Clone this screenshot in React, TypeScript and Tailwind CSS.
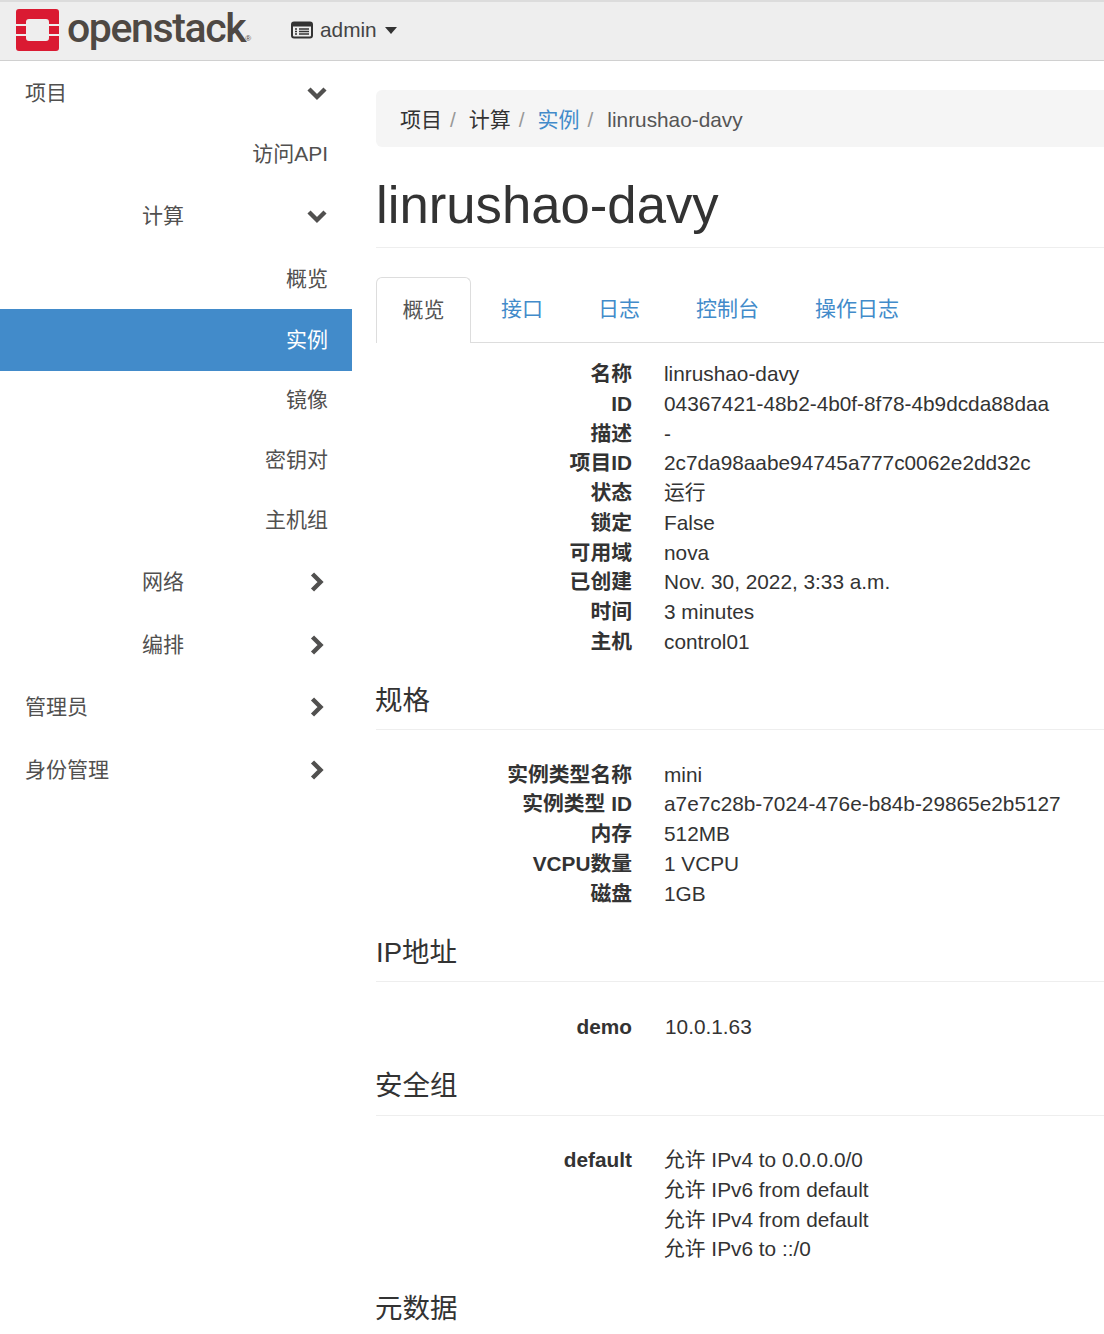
const sideRows = [
  { label: "项目", level: 1, chevron: "down", h: "h-[63px]" },
  { label: "访问API", level: 3, h: "h-[60px]" },
  { label: "计算", level: 2, chevron: "down", h: "h-[64px]" },
  { label: "概览", level: 3, h: "h-[61px]" },
  { label: "实例", level: 3, active: true, h: "h-[62px]" },
  { label: "镜像", level: 3, h: "h-[58px]" },
  { label: "密钥对", level: 3, h: "h-[61px]" },
  { label: "主机组", level: 3, h: "h-[60px]" },
  { label: "网络", level: 2, chevron: "right", h: "h-[63px]" },
  { label: "编排", level: 2, chevron: "right", h: "h-[63px]" },
  { label: "管理员", level: 1, chevron: "right", h: "h-[62px]" },
  { label: "身份管理", level: 1, chevron: "right", h: "h-[63px]" },
];

const overview = [
  ["名称", "linrushao-davy"],
  ["ID", "04367421-48b2-4b0f-8f78-4b9dcda88daa"],
  ["描述", "-"],
  ["项目ID", "2c7da98aabe94745a777c0062e2dd32c"],
  ["状态", "运行"],
  ["锁定", "False"],
  ["可用域", "nova"],
  ["已创建", "Nov. 30, 2022, 3:33 a.m."],
  ["时间", "3 minutes"],
  ["主机", "control01"],
];

const specs = [
  ["实例类型名称", "mini"],
  ["实例类型 ID", "a7e7c28b-7024-476e-b84b-29865e2b5127"],
  ["内存", "512MB"],
  ["VCPU数量", "1 VCPU"],
  ["磁盘", "1GB"],
];

const rules = ["允许 IPv4 to 0.0.0.0/0", "允许 IPv6 from default", "允许 IPv4 from default", "允许 IPv6 to ::/0"];

function Chevron({ dir }: { dir: string }) {
  return (
    <svg width="22" height="22" viewBox="0 0 22 22" className="shrink-0">
      <path
        d={dir === "down" ? "M3 7 L11 15 L19 7" : "M6.5 3 L14.5 11 L6.5 19"}
        fill="none"
        stroke="#51504f"
        strokeWidth="4.4"
      />
    </svg>
  );
}

function Logo() {
  return (
    <svg width="43" height="42" viewBox="0 0 43 42" className="shrink-0">
      <path
        d="M3 0 H40 a3 3 0 0 1 3 3 V15 H33 V13 a3 3 0 0 0 -3 -3 H13 a3 3 0 0 0 -3 3 V15 H0 V3 a3 3 0 0 1 3 -3 Z"
        fill="#da1a32"
      />
      <rect x="0" y="17" width="10" height="8" fill="#da1a32" />
      <rect x="33" y="17" width="10" height="8" fill="#da1a32" />
      <path
        d="M0 27 H10 V29 a3 3 0 0 0 3 3 H30 a3 3 0 0 0 3 -3 V27 H43 V39 a3 3 0 0 1 -3 3 H3 a3 3 0 0 1 -3 -3 Z"
        fill="#da1a32"
      />
    </svg>
  );
}

function DetailRow({ term, value, valueClass = "ml-[32px]" }: { term: string; value: string; valueClass?: string }) {
  return (
    <div className="flex h-[29.75px] leading-[29.75px]">
      <div className="w-[256px] shrink-0 text-right font-bold whitespace-nowrap">{term}</div>
      <div className={`${valueClass} whitespace-nowrap`}>{value}</div>
    </div>
  );
}

function SectionTitle({ children, className }: { children: string; className: string }) {
  return <h3 className={`text-[27.5px] leading-[31px] border-b border-[#eeeeee] ${className}`}>{children}</h3>;
}

export default function App() {
  return (
    <div
      className="h-[1334px] w-[1104px] overflow-hidden bg-white text-[20.8px] text-[#333333]"
      style={{ fontFamily: '"Liberation Sans", "Noto Sans CJK SC", sans-serif' }}
    >
      {/* Top bar */}
      <div className="flex h-[61px] items-center border-t-2 border-b border-t-[#dcdcdc] border-b-[#d0d0d0] bg-[#eeeeee] pb-[2px]">
        <div className="ml-[16px] flex items-center">
          <Logo />
          <span
            className="ml-[8px] -mt-[3px] text-[41px] leading-none text-[#4e4843] tracking-[-1.4px] font-medium"
            style={{ fontFamily: "Roboto, sans-serif" }}
          >
            openstack
          </span>
          <span className="mt-[18px] text-[8px] leading-none text-[#4e4843]">®</span>
        </div>
        <div className="ml-[40px] flex items-center text-[#444444]">
          <svg width="22" height="18" viewBox="0 0 22 18" className="shrink-0">
            <rect x="1" y="1.5" width="20" height="15" rx="2" fill="none" stroke="#333333" strokeWidth="2" />
            <rect x="1" y="1.5" width="20" height="4" fill="#333333" />
            <path d="M4 8 H6 M8 8 H18 M4 10.5 H6 M8 10.5 H18 M4 13 H6 M8 13 H18" stroke="#333333" strokeWidth="1.4" />
          </svg>
          <span className="ml-[7px]">admin</span>
          <span className="ml-[8px] h-0 w-0 border-x-[6.5px] border-t-[7px] border-x-transparent border-t-[#333333]" />
        </div>
      </div>

      <div className="flex">
        {/* Sidebar */}
        <nav className="w-[352px] shrink-0 text-[21px] text-[#51504f]">
          {sideRows.map((row) => (
            <div
              key={row.label}
              className={`flex items-center ${row.h} ${row.active ? "bg-[#428bca] text-white" : ""} ${
                row.level === 3 ? "justify-end pr-[24px]" : "pr-[24px]"
              } ${row.level === 1 ? "pl-[25px]" : ""} ${row.level === 2 ? "pl-[142px]" : ""}`}
            >
              <span className="whitespace-nowrap">{row.label}</span>
              {row.chevron && (
                <span className="ml-auto">
                  <Chevron dir={row.chevron} />
                </span>
              )}
            </div>
          ))}
        </nav>

        {/* Main */}
        <main className="ml-[24px] w-[760px] shrink-0">
          <div className="mt-[29px] flex h-[57px] items-center rounded-l-[6px] bg-[#f5f5f5] pl-[24px] pt-[2px]">
            <span className="text-[21px]">项目</span>
            <span className="ml-[8px] text-[#999999]">/</span>
            <span className="ml-[13px] text-[21px]">计算</span>
            <span className="ml-[8px] text-[#999999]">/</span>
            <span className="ml-[13px] text-[21px] text-[#428bca]">实例</span>
            <span className="ml-[8px] text-[#999999]">/</span>
            <span className="ml-[14px] text-[#555555]">linrushao-davy</span>
          </div>

          <h1 className="mt-[29px] border-b border-[#eeeeee] pb-[13px] text-[52.7px] leading-[58px] text-[#333333]">
            linrushao-davy
          </h1>

          <div className="mt-[29px] flex h-[66px] border-b border-[#dddddd] text-[21px] text-[#428bca]">
            <div className="-mb-px flex h-[66px] w-[95px] items-center justify-center rounded-t-[6px] border border-b-0 border-[#dddddd] bg-white pb-[2px] text-[#555555]">
              概览
            </div>
            <div className="ml-[30px] flex items-center pb-[2px]">接口</div>
            <div className="ml-[55px] flex items-center pb-[2px]">日志</div>
            <div className="ml-[56px] flex items-center pb-[2px]">控制台</div>
            <div className="ml-[56px] flex items-center pb-[2px]">操作日志</div>
          </div>

          <div className="mt-[16px]">
            {overview.map(([t, v]) => (
              <DetailRow key={t} term={t} value={v} />
            ))}
          </div>

          <SectionTitle className="mt-[28px] pb-[13px] -indent-px">规格</SectionTitle>
          <div className="mt-[30px]">
            {specs.map(([t, v]) => (
              <DetailRow key={t} term={t} value={v} />
            ))}
          </div>

          <SectionTitle className="mt-[29px] pb-[13px]">IP地址</SectionTitle>
          <div className="mt-[30px]">
            <DetailRow term="demo" value="10.0.1.63" valueClass="ml-[33px]" />
          </div>

          <SectionTitle className="mt-[28px] pb-[14px] -indent-px">安全组</SectionTitle>
          <div className="mt-[29px]">
            {rules.map((r, i) => (
              <DetailRow key={r} term={i === 0 ? "default" : ""} value={r} />
            ))}
          </div>

          <SectionTitle className="mt-[29px] pb-[13px] -indent-px">元数据</SectionTitle>
        </main>
      </div>
    </div>
  );
}
